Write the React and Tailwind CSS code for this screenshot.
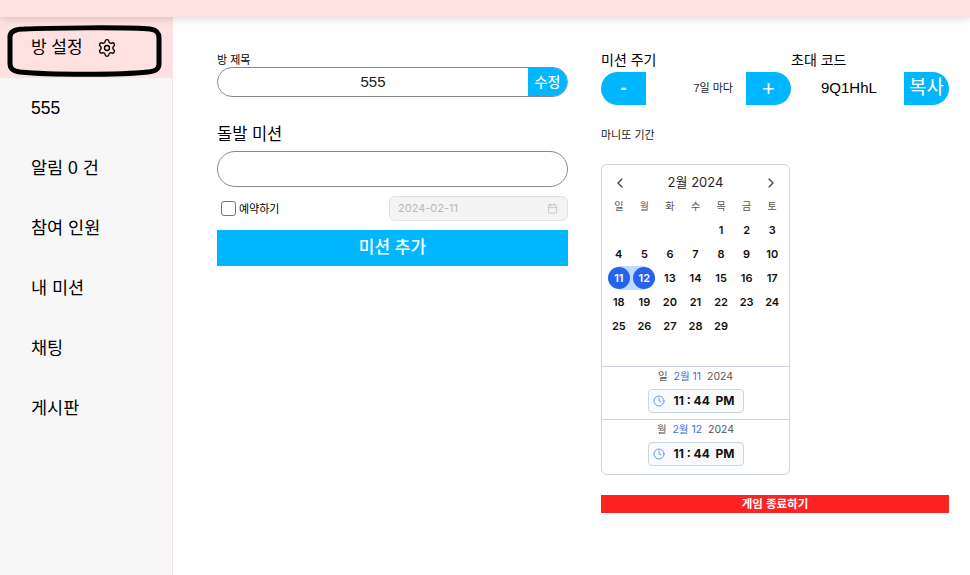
import { Settings, ChevronLeft, ChevronRight, Clock, Calendar } from 'lucide-react'

const font = "font-['Liberation_Sans','Noto_Sans_CJK_KR',sans-serif]"
const calFont = "font-['Inter','Noto_Sans_CJK_KR',sans-serif]"

const menu = ['555', '알림 0 건', '참여 인원', '내 미션', '채팅', '게시판']
const weekDays = ['일', '월', '화', '수', '목', '금', '토']
const weeks = [
  ['', '', '', '', 1, 2, 3],
  [4, 5, 6, 7, 8, 9, 10],
  [11, 12, 13, 14, 15, 16, 17],
  [18, 19, 20, 21, 22, 23, 24],
  [25, 26, 27, 28, 29, '', ''],
]

function Sidebar() {
  return (
    <aside className="relative w-[173px] shrink-0 bg-[#f7f7f7] border-r border-[#ffe1e1]">
      <div className="h-[61px] bg-[#ffe1e1] flex items-center pl-[31px] gap-[14px] text-[17px] text-black">
        방 설정
        <Settings size={20} strokeWidth={1.6} />
      </div>
      {menu.map((m) => (
        <div key={m} className="h-[60px] flex items-center pl-[31px] pt-[1px] text-[17.5px] text-black">
          {m}
        </div>
      ))}
      {/* 손으로 그린 표시 */}
      <svg className="absolute left-0 top-0 pointer-events-none" width="173" height="70" fill="none">
        <path
          d="M24 12 C45 11 130 10 150 12 C157 13 159 16 159 21 L159 47 C159 52 156 54 148 55 C120 58 50 58 20 55 C13 54 10 52 10 46 L10 20 C10 14 15 12 24 12 Z"
          stroke="#000"
          strokeWidth="5"
        />
      </svg>
    </aside>
  )
}

function LeftColumn() {
  return (
    <div className="w-[351px] shrink-0">
      <div className="text-[11px] leading-[14px] text-black mt-[3px]">방 제목</div>
      <div className="h-[30px] flex rounded-full border border-[#8a8a8a] overflow-hidden">
        <div className="flex-1 flex items-center justify-center text-[15px] text-[#222]">555</div>
        <button className="w-[39px] bg-[#00b7ff] text-white text-[14px] font-medium">수정</button>
      </div>
      <div className="text-[16.5px] leading-[24px] text-black mt-[25px] mb-[5px]">돌발 미션</div>
      <div className="h-[36px] rounded-full border border-[#8a8a8a]" />
      <div className="flex items-center justify-between mt-[9px]">
        <label className="flex items-center gap-[3px] ml-[4px] text-[11px] text-black">
          <span className="w-[15px] h-[15px] rounded-[3px] border border-[#767676] bg-white" />
          <span className="pt-[1px]">예약하기</span>
        </label>
        <div className={`w-[179px] h-[25px] flex items-center justify-between pl-[8px] pr-[9px] rounded-md border border-[#e2e2e2] bg-[#f4f4f4] text-[11px] text-[#b8b8b8] ${calFont}`}>
          2024-02-11
          <Calendar size={11} strokeWidth={1.5} />
        </div>
      </div>
      <button className="w-full h-[36px] mt-[9px] bg-[#00b7ff] text-white text-[17px] font-medium">미션 추가</button>
    </div>
  )
}

function TimeBox() {
  return (
    <div className="w-[96px] h-[24px] mx-auto mt-[5px] flex items-center gap-[9px] pl-[4px] rounded border border-[#cbd5e1] bg-[#f8fafc]">
      <Clock size={12} className="text-[#3b82f6]" strokeWidth={1.6} />
      <span className="text-[12px] font-bold text-[#111] whitespace-pre">11 : 44  PM</span>
    </div>
  )
}

function MiniCalendar() {
  return (
    <div className={`w-[189px] h-[311px] rounded-md border border-[#cbd5e1] ${calFont}`}>
      <div className="h-[34px] flex items-center justify-between px-[10px] pt-[2px] text-[13px] text-[#222]">
        <ChevronLeft size={16} className="text-[#444]" />
        <span>2월 2024</span>
        <ChevronRight size={16} className="text-[#444]" />
      </div>
      <div className="grid grid-cols-7 px-[4px] text-[10px] leading-[14px] text-[#555] text-center h-[19px]">
        {weekDays.map((d) => (
          <span key={d}>{d}</span>
        ))}
      </div>
      <div className="px-[4px] h-[147px]">
        {weeks.map((week, i) => (
          <div key={i} className="grid grid-cols-7 h-[24px] text-[11px] font-semibold text-[#111] text-center">
            {week.map((d, j) => (
              <span
                key={j}
                className={`flex items-center justify-center ${d === 11 ? 'bg-[linear-gradient(90deg,transparent_50%,#bfdbfe_50%)]' : ''} ${d === 12 ? 'bg-[linear-gradient(90deg,#bfdbfe_50%,transparent_50%)]' : ''}`}
              >
                {d === 11 || d === 12 ? (
                  <span className="w-[22px] h-[22px] rounded-full bg-[#2563eb] text-white flex items-center justify-center">{d}</span>
                ) : (
                  d
                )}
              </span>
            ))}
          </div>
        ))}
      </div>
      {[['일', '2월 11'], ['월', '2월 12']].map(([w, d], i) => (
        <div key={d} className={`h-[53px] border-t border-[#cbd5e1] pt-[3px] ${i === 0 ? 'mt-[1px]' : ''}`}>
          <div className="text-[10.5px] leading-[14px] text-center whitespace-pre text-[#555]">
            {w}  <span className="text-[#3b6fe0]">{d}</span>  2024
          </div>
          <TimeBox />
        </div>
      ))}
    </div>
  )
}

function RightColumn() {
  return (
    <div className="w-[348px] shrink-0">
      <div className="flex">
        <div className="w-[190px]">
          <div className="text-[14px] leading-[20px] text-black mb-[2px]">미션 주기</div>
          <div className="flex items-center h-[33px]">
            <button className="w-[45px] h-full rounded-l-full bg-[#00b7ff] text-white text-[18px] font-bold">-</button>
            <span className="flex-1 text-right pr-[13px] text-[11px] text-[#222]">7일 마다</span>
            <button className="w-[45px] h-full rounded-r-full bg-[#00b7ff] text-white text-[22px] font-medium">+</button>
          </div>
        </div>
        <div className="flex-1">
          <div className="text-[14px] leading-[20px] text-black mb-[2px]">초대 코드</div>
          <div className="flex items-center h-[33px]">
            <span className="flex-1 pl-[30px] text-[15px] text-black">9Q1HhL</span>
            <button className="w-[45px] h-full rounded-r-full bg-[#00b7ff] text-white text-[19px] whitespace-nowrap">복사</button>
          </div>
        </div>
      </div>
      <div className="text-[11px] leading-[14px] text-[#222] mt-[23px] mb-[22px]">마니또 기간</div>
      <MiniCalendar />
      <button className="w-full h-[18px] mt-[20px] bg-[#ff2222] text-white text-[11.5px] leading-[18px] font-semibold">게임 종료하기</button>
    </div>
  )
}

export default function App() {
  return (
    <div className={`w-[970px] h-[575px] bg-white overflow-hidden flex flex-col ${font}`}>
      <header className="relative z-10 h-[17px] shrink-0 bg-[#ffe1e1] shadow-[0_2px_8px_rgba(0,0,0,0.15)]" />
      <div className="flex flex-1 min-h-0">
        <Sidebar />
        <main className="flex gap-[33px] pl-[44px] pt-[33px]">
          <LeftColumn />
          <RightColumn />
        </main>
      </div>
    </div>
  )
}
